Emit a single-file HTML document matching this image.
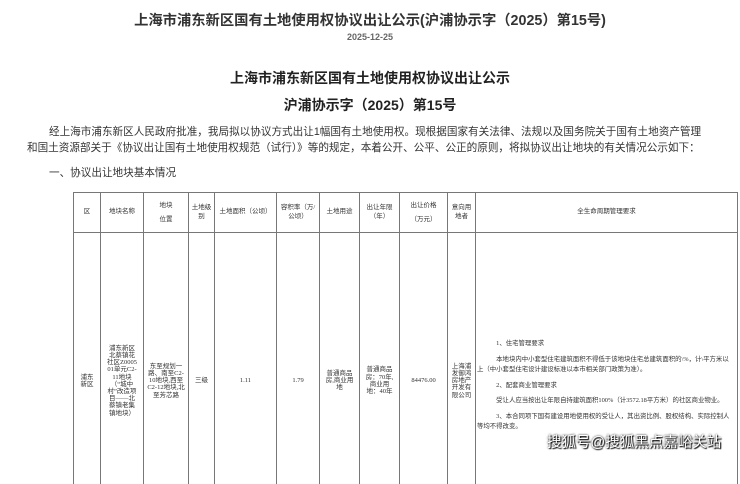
<!DOCTYPE html>
<html><head><meta charset="utf-8"><style>
html,body{margin:0;width:740px;height:484px;overflow:hidden}
body{background:#fff;font-family:"Liberation Sans","Noto Sans CJK SC",sans-serif;color:#222;position:relative}
.a{position:absolute;white-space:nowrap}
table{position:absolute;left:73px;top:192px;border-collapse:collapse;table-layout:fixed;font-family:"Liberation Serif","Noto Sans CJK SC",sans-serif;font-size:6.5px;line-height:7.2px;color:#333}
td{border:1px solid #777;text-align:center;vertical-align:middle;padding:0 2px;word-break:break-all}
.h td{line-height:8.5px}
.r td{padding-top:44px;border-bottom:none}
.r td.p{font-size:6.4px;line-height:10.5px;text-align:left;vertical-align:top;padding:106px 2px 0 1px}
.p div{margin-bottom:5px}
</style></head><body>
<div class="a" style="left:0;width:740px;text-align:center;top:9px;font-size:14.3px;font-weight:bold;color:#333">上海市浦东新区国有土地使用权协议出让公示(沪浦协示字（2025）第15号)</div>
<div class="a" style="left:0;width:740px;text-align:center;top:32px;font-size:9px;font-weight:bold;color:#666">2025-12-25</div>
<div class="a" style="left:0;width:740px;text-align:center;top:68px;font-size:14px;font-weight:bold;color:#222">上海市浦东新区国有土地使用权协议出让公示</div>
<div class="a" style="left:0;width:740px;text-align:center;top:95px;font-size:14px;font-weight:bold;color:#222">沪浦协示字（2025）第15号</div>
<div class="a" style="left:49px;top:124px;font-size:10.6px;color:#333">经上海市浦东新区人民政府批准，我局拟以协议方式出让1幅国有土地使用权。现根据国家有关法律、法规以及国务院关于国有土地资产管理</div>
<div class="a" style="left:27px;top:140px;font-size:10.6px;color:#333">和国土资源部关于《协议出让国有土地使用权规范（试行）》等的规定，本着公开、公平、公正的原则，将拟协议出让地块的有关情况公示如下：</div>
<div class="a" style="left:49px;top:165px;font-size:10.6px;color:#333">一、协议出让地块基本情况</div>
<table>
<colgroup><col style="width:27px"><col style="width:43px"><col style="width:45px"><col style="width:26px"><col style="width:62px"><col style="width:43px"><col style="width:40px"><col style="width:40px"><col style="width:48px"><col style="width:28px"><col style="width:262px"></colgroup>
<tr class="h" style="height:40px"><td>区</td><td>地块名称</td><td style="line-height:14px">地块<br>位置</td><td>土地级别</td><td>土地面积（公顷）</td><td>容积率（万/公顷）</td><td>土地用途</td><td>出让年限（年）</td><td style="line-height:14px">出让价格<br>（万元）</td><td>意向用地者</td><td>全生命周期管理要求</td></tr>
<tr class="r" style="height:252px"><td style="padding-left:5px;padding-right:5px">浦东新区</td><td style="padding-left:5px;padding-right:5px">浦东新区北蔡镇花社区Z000501单元C2-11地块（“城中村”改造项目——北蔡镇老集镇地块）</td><td style="padding-left:3px;padding-right:3px">东至规划一路、南至C2-10地块,西至C2-12地块,北至芳芯路</td><td>三级</td><td>1.11</td><td>1.79</td><td style="padding-left:5px;padding-right:5px">普通商品房,商业用地</td><td style="padding-left:5px;padding-right:5px">普通商品房：70年,商业用地：40年</td><td>84476.00</td><td style="padding-left:1px;padding-right:1px">上海浦发御鸿房地产开发有限公司</td>
<td class="p"><div>&emsp;&emsp;&emsp;1、住宅管理要求</div><div>&emsp;&emsp;&emsp;本地块内中小套型住宅建筑面积不得低于该地块住宅总建筑面积的\%，计\平方米以上（中小套型住宅设计建设标准以本市相关部门政策为准）。</div><div>&emsp;&emsp;&emsp;2、配套商业管理要求</div><div>&emsp;&emsp;&emsp;受让人应当按出让年限自持建筑面积100%（计3572.18平方米）的社区商业物业。</div><div>&emsp;&emsp;&emsp;3、本合同项下国有建设用地使用权的受让人，其出资比例、股权结构、实际控制人等均不得改变。</div></td></tr>
</table>
<div class="a" style="left:547px;top:431px;font-size:14.5px;color:#fff;text-shadow:0 0 2px #000,1px 1px 1px #000">搜狐号@搜狐黑点嘉峪关站</div>
</body></html>
